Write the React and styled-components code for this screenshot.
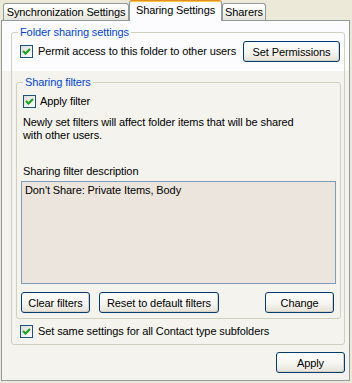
import React from 'react';
import styled, { createGlobalStyle } from 'styled-components';

const Global = createGlobalStyle`
  html, body { margin: 0; padding: 0; background: #ECE9D8; }
  body { font-family: "Liberation Sans", Arial, sans-serif; font-size: 11px; color: #000; }
  * { box-sizing: border-box; }
`;

const Window = styled.div`
  width: 352px;
  height: 383px;
  display: flex;
  flex-direction: column;
  padding: 0 2px 2px 1px;
  background: #ECE9D8;
  font-family: "Liberation Sans", Arial, sans-serif;
  font-size: 11px;
  letter-spacing: -0.1px;
  color: #000;
`;

const TabStrip = styled.div`
  display: flex;
  align-items: flex-end;
  height: 20px;
  flex-shrink: 0;
  padding-left: 2px;
  position: relative;
  z-index: 1;
`;

const Tab = styled.div`
  width: ${(p) => p.$w}px;
  height: ${(p) => (p.$active ? 21 : 17)}px;
  margin-bottom: ${(p) => (p.$active ? -1 : 0)}px;
  border: 1px solid #919B9C;
  border-bottom: 0;
  border-top-color: ${(p) => (p.$active ? '#E68B2C' : '#919B9C')};
  border-radius: 3px 3px 0 0;
  background: ${(p) =>
    p.$active ? '#FCFCFE' : 'linear-gradient(#FFFFFF, #F4F4F0 50%, #E4E4DC)'};
  box-shadow: ${(p) => (p.$active ? 'inset 0 1px 0 #FFC73C' : 'none')};
  text-align: center;
  line-height: 13px;
  padding-top: ${(p) => (p.$active ? 3 : 2)}px;
  white-space: nowrap;
`;

const Page = styled.div`
  flex: 1;
  display: flex;
  flex-direction: column;
  border: 1px solid #919B9C;
  background: linear-gradient(#FCFCFE 0, #FCFCFE 50px, #F4F3EE 50px);
  padding: 5px 4px 0 9px;
`;

const Group = styled.fieldset`
  margin: ${(p) => p.$mt || 0}px 0 0 0;
  min-width: 0;
  border: 1px solid #D0D0BF;
  border-radius: 3px;
  padding: 0 ${(p) => p.$pr}px ${(p) => p.$pb}px ${(p) => p.$pl}px;
  display: flex;
  flex-direction: column;
`;

const Legend = styled.legend`
  margin-left: ${(p) => p.$ml}px;
  padding: 0 2px;
  color: #0046D5;
  line-height: 13px;
`;

const Row = styled.div`
  display: flex;
  align-items: center;
  height: 21px;
  margin-top: 2px;
  padding: 0 1px 0 4px;
`;

const CheckRow = styled.div`
  display: flex;
  align-items: center;
  height: 13px;
  margin-top: ${(p) => p.$mt}px;
  margin-left: ${(p) => p.$ml}px;
`;

const CheckLabel = styled.span`
  margin-left: ${(p) => p.$gap || 5}px;
  line-height: 13px;
  white-space: nowrap;
`;

const Box = styled.span`
  width: 13px;
  height: 13px;
  flex-shrink: 0;
  border: 1px solid #1C5180;
  background: linear-gradient(135deg, #DCDCD7, #FFFFFF);
  display: flex;
  align-items: center;
  justify-content: center;
`;

const Text = styled.div`
  margin-top: ${(p) => p.$mt}px;
  margin-left: 2px;
  line-height: 13px;
  white-space: nowrap;
`;

const TextBox = styled.div`
  margin-top: 3px;
  height: 103px;
  border: 1px solid #7F9DB9;
  background: #ECE5DD;
  padding: 2px 3px;
  line-height: 13px;
`;

const ButtonRow = styled.div`
  display: flex;
  gap: 9px;
  margin-top: 8px;
  padding-right: 2px;
`;

const Button = styled.button`
  width: ${(p) => p.$w}px;
  height: 21px;
  flex-shrink: 0;
  margin-left: ${(p) => (p.$push ? 'auto' : '0')};
  padding: 0;
  font-family: inherit;
  font-size: 11px;
  letter-spacing: inherit;
  color: #000;
  border: 1px solid #003C74;
  border-radius: 3px;
  background: linear-gradient(#FFFFFF, #F6F5F1 55%, #E4E1D6);
  box-shadow: inset -1px -1px 0 #D8D2C6;
  white-space: nowrap;
`;

const Footer = styled.div`
  display: flex;
  justify-content: flex-end;
  margin-top: 7px;
`;

const Check = () => (
  <Box>
    <svg width="11" height="11" viewBox="0 0 11 11">
      <polyline
        points="2,5 4.5,7.5 9,3"
        fill="none"
        stroke="#21A121"
        strokeWidth="2.2"
      />
    </svg>
  </Box>
);

export default function App() {
  return (
    <>
      <Global />
      <Window>
        <TabStrip>
          <Tab $w={126}>Synchronization Settings</Tab>
          <Tab $w={93} $active>Sharing Settings</Tab>
          <Tab $w={44}>Sharers</Tab>
        </TabStrip>
        <Page>
          <Group $pl={4} $pr={3} $pb={6}>
            <Legend $ml={2}>Folder sharing settings</Legend>
            <Row>
              <Check />
              <CheckLabel>Permit access to this folder to other users</CheckLabel>
              <Button $w={97} $push>Set Permissions</Button>
            </Row>
            <Group $mt={14} $pl={4} $pr={4} $pb={5}>
              <Legend $ml={2}>Sharing filters</Legend>
              <CheckRow $mt={6} $ml={2}>
                <Check />
                <CheckLabel $gap={4}>Apply filter</CheckLabel>
              </CheckRow>
              <Text $mt={8}>
                Newly set filters will affect folder items that will be shared
                <br />
                with other users.
              </Text>
              <Text $mt={23}>Sharing filter description</Text>
              <TextBox>Don't Share: Private Items, Body</TextBox>
              <ButtonRow>
                <Button $w={69}>Clear filters</Button>
                <Button $w={120}>Reset to default filters</Button>
                <Button $w={69} $push>Change</Button>
              </ButtonRow>
            </Group>
            <CheckRow $mt={6} $ml={4}>
              <Check />
              <CheckLabel>Set same settings for all Contact type subfolders</CheckLabel>
            </CheckRow>
          </Group>
          <Footer>
            <Button $w={69}>Apply</Button>
          </Footer>
        </Page>
      </Window>
    </>
  );
}
